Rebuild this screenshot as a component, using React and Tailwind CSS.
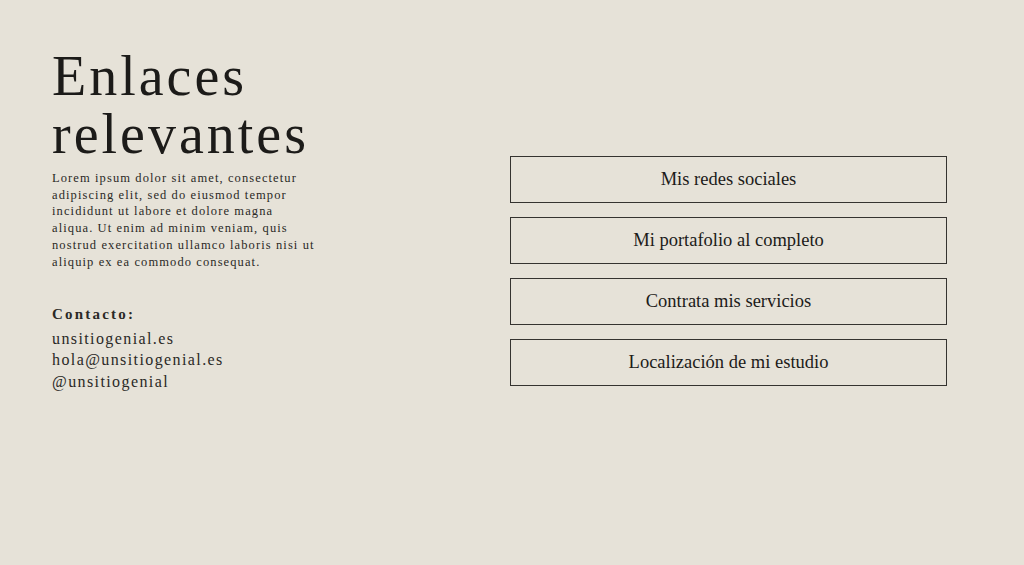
import React from 'react';

const links = [
  'Mis redes sociales',
  'Mi portafolio al completo',
  'Contrata mis servicios',
  'Localización de mi estudio',
];

const intro = [
  'Lorem ipsum dolor sit amet, consectetur',
  'adipiscing elit, sed do eiusmod tempor',
  'incididunt ut labore et dolore magna',
  'aliqua. Ut enim ad minim veniam, quis',
  'nostrud exercitation ullamco laboris nisi ut',
  'aliquip ex ea commodo consequat.',
];

const serif = "font-['Liberation_Serif','DejaVu_Serif',serif]";

export default function App() {
  return (
    <div className={`min-h-[565px] w-full bg-[#e6e2d8] text-[#1c1b19] ${serif}`}>
      <div className="flex pl-[52px] pt-[47px]">
        {/* Left column */}
        <div className="w-[300px] shrink-0">
          <h1 className="text-[56px] leading-[58px] tracking-[3px] font-normal">
            Enlaces
            <br />
            relevantes
          </h1>
          <p className="mt-[7px] whitespace-nowrap text-[12.5px] leading-[16.7px] tracking-[1.1px] text-[#2a2926]">
            {intro.map((line) => (
              <span key={line} className="block">
                {line}
              </span>
            ))}
          </p>
          <div className="mt-[34px] text-[16px] leading-[21.5px] tracking-[1.4px] text-[#2a2926]">
            <p className="mb-[2px] text-[15px] font-bold tracking-[2.2px]">Contacto:</p>
            <p>unsitiogenial.es</p>
            <p>hola@unsitiogenial.es</p>
            <p>@unsitiogenial</p>
          </div>
        </div>

        {/* Right column */}
        <div className="ml-[158px] mt-[109px] flex w-[437px] flex-col gap-[14px]">
          {links.map((label) => (
            <a
              key={label}
              href="#"
              className="flex h-[47px] items-center justify-center border-[1.5px] border-[#353330] text-[18.5px] text-[#1c1b19]"
            >
              {label}
            </a>
          ))}
        </div>
      </div>
    </div>
  );
}
